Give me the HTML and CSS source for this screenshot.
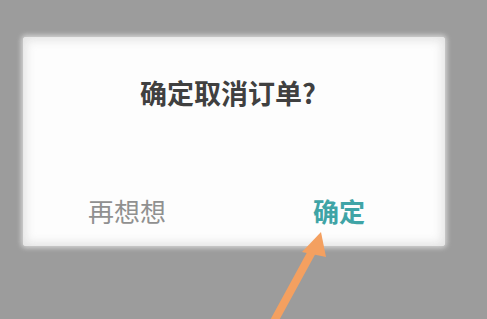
FILE: index.html
```html
<!DOCTYPE html>
<html lang="zh">
<head>
<meta charset="utf-8">
<link rel="stylesheet" href="styles.css">
</head>
<body>
<div class="stage">
  <div class="dialog">
    <div class="title">确定取消订单?</div>
    <div class="actions">
      <span class="btn cancel">再想想</span>
      <span class="btn ok">确定</span>
    </div>
  </div>
  <svg class="arrow" width="487" height="319" viewBox="0 0 487 319">
    <line x1="272" y1="325" x2="314" y2="248" stroke="#f4a060" stroke-width="8" stroke-linecap="round"/>
    <polygon points="321,232 302,252 326,257" fill="#f4a060"/>
  </svg>
</div>
</body>
</html>
```
FILE: styles.css
```css
html, body {
  margin: 0;
  padding: 0;
}
body {
  background: #9c9c9c;
  font-family: "Noto Sans CJK SC", "Noto Sans", sans-serif;
  width: 487px;
  height: 319px;
  overflow: hidden;
}
.stage {
  position: relative;
  width: 487px;
  height: 319px;
  padding-top: 37px;
  box-sizing: border-box;
}
.dialog {
  margin-left: 23px;
  width: 422px;
  height: 209px;
  background: #fdfdfd;
  box-shadow: 0 0 5px 2px rgba(225, 225, 225, 0.8), inset 0 0 10px 3px rgba(215, 215, 215, 0.7);
  border-radius: 3px;
  display: flex;
  flex-direction: column;
}
.title {
  margin-top: 38px;
  padding-right: 12px;
  text-align: center;
  font-size: 27px;
  line-height: 36px;
  font-weight: 700;
  color: #404040;
}
.actions {
  margin-top: 85px;
  display: flex;
  padding-left: 65px;
}
.btn {
  font-size: 26px;
  line-height: 30px;
}
.cancel {
  color: #909090;
  font-weight: 400;
}
.ok {
  margin-left: 147px;
  color: #3fa4a6;
  font-weight: 700;
}
.arrow {
  position: absolute;
  left: 0;
  top: 0;
}
```
